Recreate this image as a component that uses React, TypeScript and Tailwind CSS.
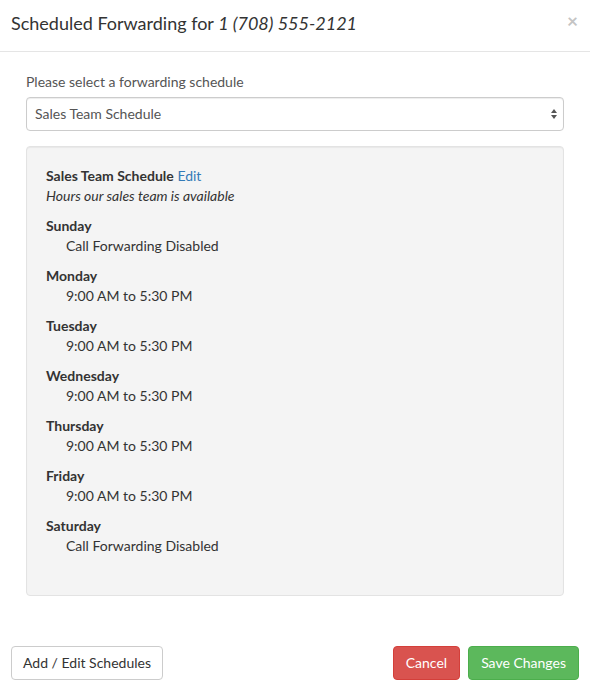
const days = [
  { name: 'Sunday', hours: 'Call Forwarding Disabled' },
  { name: 'Monday', hours: '9:00 AM to 5:30 PM' },
  { name: 'Tuesday', hours: '9:00 AM to 5:30 PM' },
  { name: 'Wednesday', hours: '9:00 AM to 5:30 PM' },
  { name: 'Thursday', hours: '9:00 AM to 5:30 PM' },
  { name: 'Friday', hours: '9:00 AM to 5:30 PM' },
  { name: 'Saturday', hours: 'Call Forwarding Disabled' },
]

export default function App() {
  return (
    <div className="w-[590px] h-[692px] bg-white text-[#333] text-[14px] leading-[20px] font-['Lato','Liberation_Sans',sans-serif] flex flex-col">
      {/* header */}
      <div className="h-[52px] border-b border-[#e5e5e5] flex items-center justify-between pl-[11px] pr-[12px]">
        <h4 className="text-[18px] leading-[24px] mt-[-5px]">
          Scheduled Forwarding for <i>1 (708) 555-2121</i>
        </h4>
        <span className="text-[#c4c4c4] text-[19px] font-bold leading-none mt-[-10px]">×</span>
      </div>

      {/* body */}
      <div className="px-[26px] pt-[20px] flex flex-col">
        <label className="text-[#555] mb-[5px]">Please select a forwarding schedule</label>
        <div className="h-[34px] border border-[#ccc] rounded-[4px] flex items-center justify-between pl-[8px] pr-[5px] shadow-[inset_0_1px_1px_rgba(0,0,0,0.075)]">
          <span className="text-[#555]">Sales Team Schedule</span>
          <svg width="8" height="12" viewBox="0 0 8 12">
            <path d="M4 1 L7 5 L1 5 Z" fill="#555" />
            <path d="M4 11 L7 7 L1 7 Z" fill="#555" />
          </svg>
        </div>

        <div className="mt-[15px] h-[450px] bg-[#f4f4f4] border border-[#e3e3e3] rounded-[4px] pt-[19px] px-[19px] shadow-[inset_0_1px_1px_rgba(0,0,0,0.05)]">
          <div className="mb-[10px]">
            <div>
              <b>Sales Team Schedule</b> <a className="text-[#337ab7]">Edit</a>
            </div>
            <i>Hours our sales team is available</i>
          </div>
          {days.map((d) => (
            <div key={d.name} className="mb-[10px]">
              <b className="block">{d.name}</b>
              <div className="pl-[20px]">{d.hours}</div>
            </div>
          ))}
        </div>
      </div>

      {/* footer */}
      <div className="mt-[50px] px-[11px] flex items-center justify-between">
        <button className="h-[34px] px-[11px] border border-[#ccc] rounded-[4px] bg-white text-[#333]">
          Add / Edit Schedules
        </button>
        <div className="flex gap-[8px]">
          <button className="h-[34px] px-[12px] border border-[#d43f3a] rounded-[4px] bg-[#d9534f] text-white">
            Cancel
          </button>
          <button className="h-[34px] px-[12px] border border-[#4cae4c] rounded-[4px] bg-[#5cb85c] text-white">
            Save Changes
          </button>
        </div>
      </div>
    </div>
  )
}
